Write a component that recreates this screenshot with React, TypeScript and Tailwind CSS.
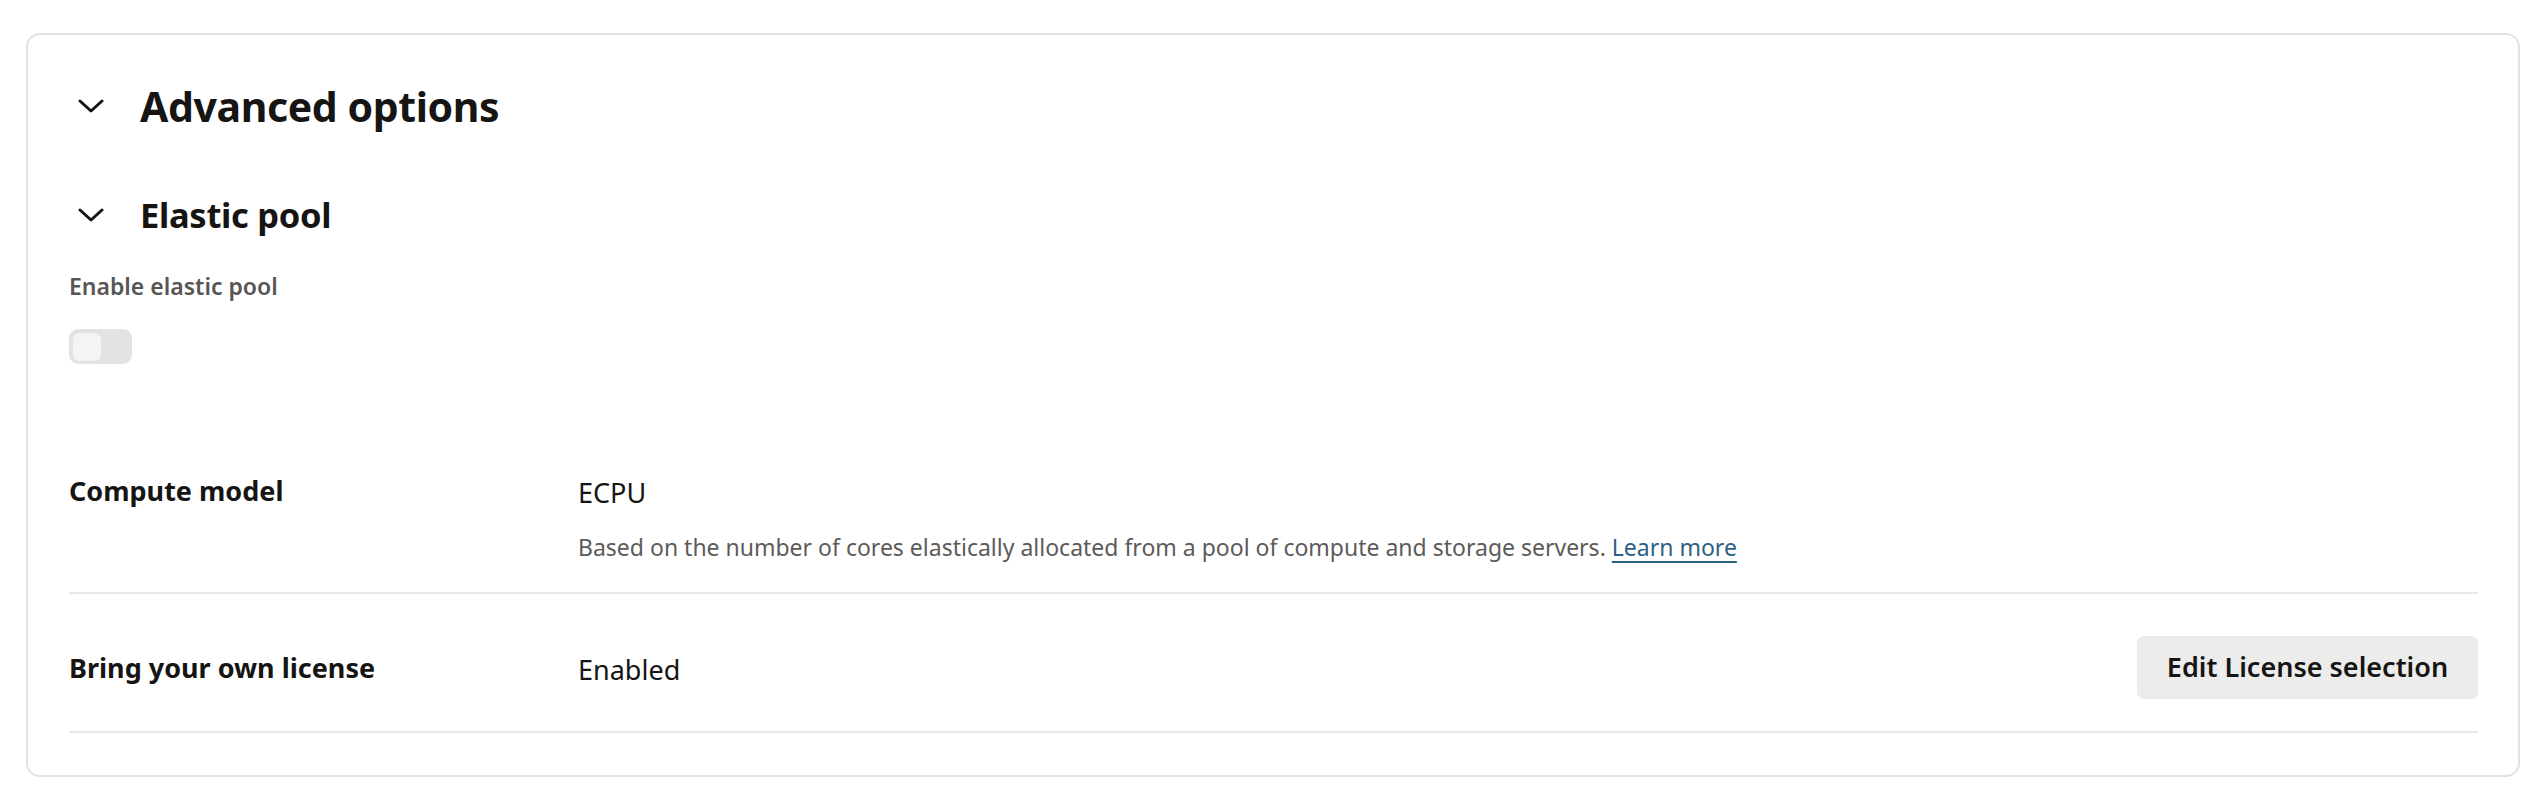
import type { ReactNode } from "react";

/* Advanced options panel — collapsible section with an elastic pool toggle
   and a two-row summary (compute model / BYOL) underneath. */

function Chevron() {
  return (
    <span className="flex h-[44px] w-[44px] shrink-0 items-center justify-center">
      <svg width="26" height="14" viewBox="0 0 26 14" fill="none">
        <path d="M2 2 L13 12 L24 2" stroke="#161513" strokeWidth="3" strokeLinecap="round" strokeLinejoin="round" />
      </svg>
    </span>
  );
}

function SectionTitle({ children, size }: { children: ReactNode; size: "lg" | "md" }) {
  return (
    <div className="flex items-center gap-[27px]">
      <Chevron />
      {size === "lg" ? (
        <h2 className="text-[41px] font-bold leading-[50px] tracking-[-0.4px] text-[#161513]">{children}</h2>
      ) : (
        <h3 className="text-[34.5px] font-bold leading-[42px] tracking-[-0.3px] text-[#161513]">{children}</h3>
      )}
    </div>
  );
}

function Toggle() {
  return (
    <button
      type="button"
      role="switch"
      aria-checked="false"
      className="flex h-[35px] w-[63px] items-center rounded-[9px] bg-[#e4e3e1] pl-[4px]"
    >
      <span className="h-[28px] w-[28px] rounded-[7px] bg-[#f5f4f3]" />
    </button>
  );
}

export default function App() {
  return (
    <div
      className="min-h-screen bg-white pb-[20px] pl-[26px] pr-[4px] pt-[33px]"
      style={{ fontFamily: '"Noto Sans", "Open Sans", Arial, sans-serif' }}
    >
      <section className="rounded-[14px] border-2 border-[#e3e3e3] pb-[42px] pl-[41px] pr-[40px] pt-[46px]">
        <SectionTitle size="lg">Advanced options</SectionTitle>

        <div className="mt-[62px]">
          <SectionTitle size="md">Elastic pool</SectionTitle>
        </div>

        <div className="mt-[34px] text-[23px] font-semibold leading-[30px] text-[#575655]">Enable elastic pool</div>
        <div className="mt-[28px]">
          <Toggle />
        </div>

        {/* summary rows */}
        <div className="mt-[110px] flex border-b-2 border-[#e8e8e8] pb-[30px]">
          <div className="w-[509px] shrink-0 text-[27px] font-bold leading-[34px] text-[#161513]">Compute model</div>
          <div className="flex flex-col pt-[2px]">
            <div className="text-[27px] leading-[34px] text-[#161513]">ECPU</div>
            <p className="mt-[22px] text-[23px] leading-[30px] text-[#5c5b5a]">
              Based on the number of cores elastically allocated from a pool of compute and storage servers.{" "}
              <a href="#" className="text-[#2c6184] underline decoration-2 underline-offset-[5px]">
                Learn more
              </a>
            </p>
          </div>
        </div>

        <div className="flex items-center border-b-2 border-[#e8e8e8] pb-[32px] pt-[42px]">
          <div className="w-[509px] shrink-0 text-[27px] font-bold leading-[34px] text-[#161513]">
            Bring your own license
          </div>
          <div className="pt-[4px] text-[27px] leading-[34px] text-[#161513]">Enabled</div>
          <button
            type="button"
            className="ml-auto flex h-[63px] w-[341px] items-center justify-center rounded-[7px] bg-[#ececeb] text-[27px] font-semibold text-[#161513]"
          >
            Edit License selection
          </button>
        </div>
      </section>
    </div>
  );
}
